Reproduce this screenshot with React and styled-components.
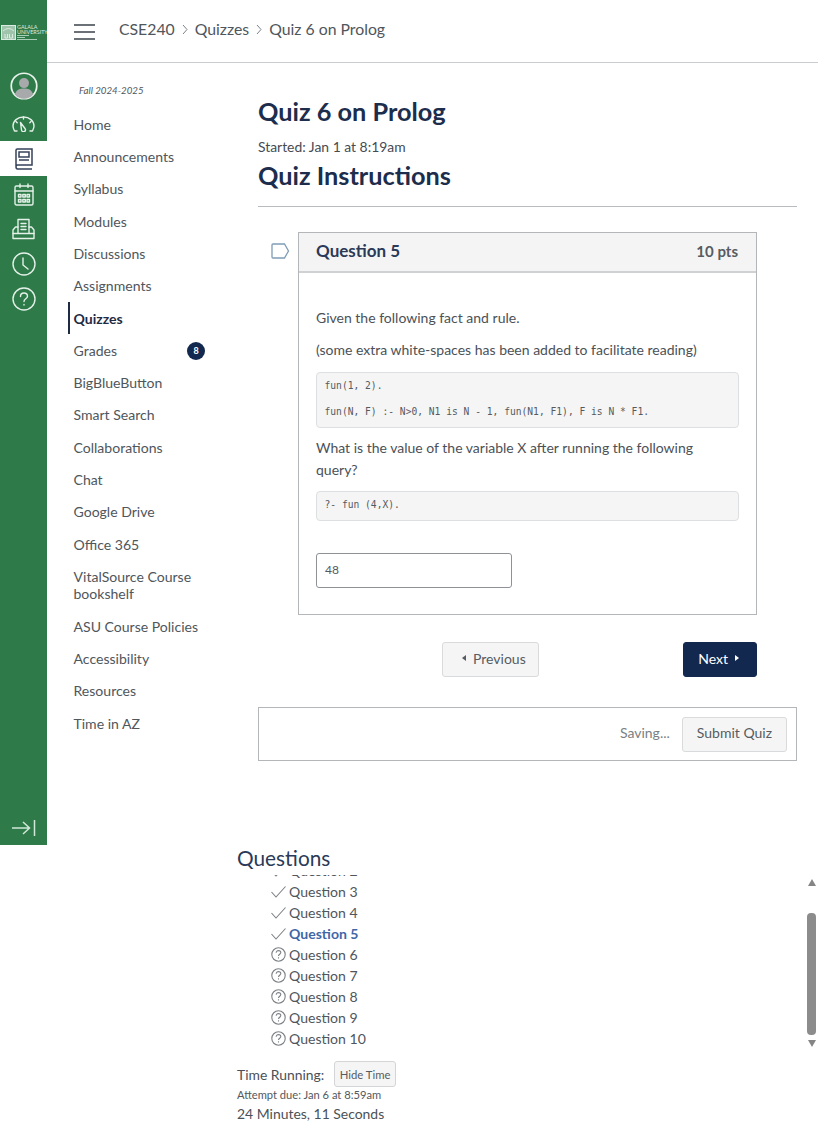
import React from "react";
import styled, { createGlobalStyle } from "styled-components";

const GlobalStyle = createGlobalStyle`
  html, body { margin: 0; padding: 0; background: #fff; }
  body { font-family: Lato, "Open Sans", sans-serif; color: #4b5157; }
  * { box-sizing: border-box; }
`;

const Page = styled.div`
  width: 826px;
  height: 1145px;
  overflow: hidden;
`;

const Top = styled.div`
  display: flex;
  height: 845px;
`;

const Rail = styled.nav`
  width: 47px;
  flex-shrink: 0;
  background: #2f7a49;
  display: flex;
  flex-direction: column;
  align-items: center;
  padding-top: 25px;
`;

const Logo = styled.div`
  width: 47px;
  height: 16px;
  display: flex;
  align-items: flex-start;
  gap: 1px;
  padding-left: 1px;
  color: #dcebe1;
  overflow: hidden;
`;

const LogoText = styled.span`
  display: block;
  font-size: 5.4px;
  line-height: 4.5px;
  white-space: nowrap;
`;

const LogoRule = styled.div`
  width: ${({ $w }) => $w}px;
  height: 1px;
  margin-top: 1px;
  background: #a9cdb6;
`;

const RailItem = styled.div`
  width: 47px;
  height: ${({ $h }) => $h}px;
  margin-top: ${({ $mt }) => $mt || 0}px;
  display: flex;
  align-items: center;
  justify-content: center;
  color: #e3f1e8;
  background: ${({ $active }) => ($active ? "#fff" : "transparent")};
`;

const RailBottom = styled.div`
  margin-top: auto;
  padding-bottom: 8px;
  color: #cfe8d8;
  display: flex;
`;

const Content = styled.div`
  width: 771px;
`;

const Header = styled.header`
  height: 63px;
  border-bottom: 1px solid #c9cdd0;
  padding-left: 27px;
  display: flex;
  align-items: center;
  padding-bottom: 5px;
`;

const Burger = styled.div`
  width: 21px;
  height: 16px;
  margin: 7px 24px 0 0;
  border-top: 2px solid #6b7176;
  border-bottom: 2px solid #6b7176;
  position: relative;
  &::after {
    content: "";
    position: absolute;
    left: 0;
    right: 0;
    top: 5px;
    height: 2px;
    background: #6b7176;
  }
`;

const Crumb = styled.span`
  font-size: 15.8px;
  color: #4f565c;
`;

const CrumbSep = styled.svg`
  width: 8px;
  height: 11px;
  margin: 1px 6px 0 6px;
`;

const Body = styled.div`
  display: flex;
`;

const CourseNav = styled.aside`
  width: 190px;
  margin-left: 21px;
  padding-top: 21px;
  flex-shrink: 0;
`;

const Term = styled.div`
  font-size: 9.7px;
  font-style: italic;
  line-height: 12px;
  margin: 0 0 12.4px 11px;
  color: #50565b;
`;

const NavLink = styled.div`
  width: 137px;
  height: ${({ $tall }) => ($tall ? 49.8 : 32.3)}px;
  display: flex;
  align-items: center;
  justify-content: space-between;
  padding-left: 3.5px;
  font-size: 14.05px;
  line-height: 17.5px;
  color: ${({ $active }) => ($active ? "#1f2b44" : "#4f565c")};
  font-weight: ${({ $active }) => ($active ? 700 : 400)};
  border-left: 2px solid ${({ $active }) => ($active ? "#1f2b44" : "transparent")};
`;

const NavBadge = styled.span`
  width: 18px;
  height: 18px;
  border-radius: 50%;
  background: #12284f;
  color: #fff;
  font-size: 9px;
  font-weight: 700;
  display: flex;
  align-items: center;
  justify-content: center;
`;

const Main = styled.main`
  width: 539px;
  padding-top: 31px;
`;

const Title = styled.h1`
  margin: 0;
  font-size: 25.3px;
  line-height: 34px;
  font-weight: 700;
  color: #1c2d4d;
`;

const Started = styled.div`
  font-size: 13.9px;
  line-height: 18px;
  margin: 10px 0 2px;
  color: #454b52;
`;

const Subtitle = styled.h2`
  margin: 0;
  font-size: 25.3px;
  line-height: 34px;
  font-weight: 700;
  color: #1c2d4d;
  padding-bottom: 14px;
  border-bottom: 1px solid #b8bcc0;
`;

const QuestionRow = styled.div`
  position: relative;
  margin: 25px 40px 0 40px;
`;

const Flag = styled.svg`
  position: absolute;
  left: -27px;
  top: 11px;
  width: 19px;
  height: 16px;
`;

const Card = styled.section`
  border: 1px solid #b4b7ba;
`;

const CardHead = styled.div`
  height: 40px;
  background: #f4f4f4;
  border-bottom: 2px solid #cfd1d3;
  padding: 0 18px 3px 17px;
  display: flex;
  align-items: center;
  justify-content: space-between;
`;

const CardTitle = styled.span`
  font-size: 17px;
  font-weight: 700;
  color: #2a3a58;
`;

const Points = styled.span`
  font-size: 15px;
  font-weight: 700;
  color: #565c62;
`;

const CardBody = styled.div`
  padding: 33px 17px 26px;
`;

const Para = styled.p`
  margin: 0 0 ${({ $mb }) => $mb ?? 14}px;
  font-size: 14px;
  line-height: ${({ $lh }) => $lh || 24}px;
  color: #4b5157;
  width: ${({ $w }) => $w || "auto"};
`;

const Code = styled.div`
  background: #f5f5f5;
  border: 1px solid #dedfe0;
  border-radius: 4px;
  padding: 0 7.5px 2px;
  margin-bottom: 9px;
  font-family: "DejaVu Sans Mono", monospace;
  font-size: 9.65px;
  color: #555a5f;
`;

const CodeLine = styled.div`
  height: 26px;
  line-height: 26px;
`;

const Answer = styled.div`
  width: 196px;
  height: 35px;
  margin-top: 32px;
  border: 1px solid #8e9296;
  border-radius: 3px;
  padding: 0 8px 3px;
  display: flex;
  align-items: center;
  font-size: 12px;
  color: #555a5f;
`;

const Pager = styled.div`
  display: flex;
  justify-content: space-between;
  margin: 27px 40px 0 184px;
`;

const Btn = styled.div`
  height: 35px;
  padding: ${({ $pad }) => $pad || "0 14px 3px"};
  border-radius: 3px;
  display: flex;
  align-items: center;
  gap: 7px;
  font-size: 14px;
  background: ${({ $primary }) => ($primary ? "#12284f" : "#f5f5f5")};
  color: ${({ $primary }) => ($primary ? "#fff" : "#565c62")};
  border: 1px solid ${({ $primary }) => ($primary ? "#12284f" : "#d9dadb")};
`;

const Tri = styled.span`
  width: 0;
  height: 0;
  border-top: 3px solid transparent;
  border-bottom: 3px solid transparent;
  ${({ $left }) => ($left ? "border-right: 4px solid currentColor;" : "border-left: 4px solid currentColor;")}
`;

const SubmitBar = styled.div`
  height: 54px;
  margin-top: 30px;
  border: 1px solid #b4b7ba;
  display: flex;
  align-items: center;
  justify-content: flex-end;
  padding-right: 9px;
  gap: 12px;
`;

const Saving = styled.span`
  font-size: 14px;
  margin-bottom: 3px;
  color: #7a7f84;
`;

const Bottom = styled.div`
  padding-left: 237px;
  position: relative;
`;

const QuestionsTitle = styled.h3`
  margin: 0;
  padding-bottom: 4px;
  font-size: 20.8px;
  line-height: 26px;
  font-weight: 400;
  color: #2a3a58;
`;

const ListWindow = styled.div`
  height: 175px;
  overflow: hidden;
`;

const List = styled.ul`
  list-style: none;
  margin: -15px 0 0 34px;
  padding: 0;
`;

const ListItem = styled.li`
  height: 21px;
  display: flex;
  align-items: center;
  gap: 3px;
  font-size: 14.05px;
  color: ${({ $current }) => ($current ? "#3f67a8" : "#4f565c")};
  font-weight: ${({ $current }) => ($current ? 700 : 400)};
`;

const StatusIcon = styled.svg`
  width: 15px;
  height: 15px;
  color: #7c8085;
  flex-shrink: 0;
`;

const Scrollbar = styled.div`
  position: absolute;
  left: 807px;
  top: 34px;
  width: 9px;
  display: flex;
  flex-direction: column;
  align-items: center;
`;

const ScrollArrow = styled.span`
  width: 0;
  height: 0;
  border-left: 4.5px solid transparent;
  border-right: 4.5px solid transparent;
  ${({ $down }) => ($down ? "border-top: 7px solid #858585;" : "border-bottom: 7px solid #858585;")}
`;

const ScrollThumb = styled.div`
  width: 9px;
  height: 122px;
  margin: 27px 0 5px;
  border-radius: 4px;
  background: #8c8c8c;
`;

const TimerRow = styled.div`
  display: flex;
  align-items: center;
  gap: 9.500px;
  margin-top: 11px;
  font-size: 13.9px;
  color: #4b5157;
`;

const SmallBtn = styled.div`
  height: 26px;
  padding: 0 5px;
  border: 1px solid #d4d5d6;
  border-radius: 3px;
  background: #f5f5f5;
  display: flex;
  align-items: center;
  font-size: 11.3px;
  color: #565c62;
`;

const Due = styled.div`
  font-size: 11.15px;
  line-height: 14px;
  margin-top: 1px;
  color: #53585d;
`;

const Remaining = styled.div`
  font-size: 13.95px;
  line-height: 20px;
  margin-top: 2px;
  color: #4b5157;
`;

const navItems = [
  "Home", "Announcements", "Syllabus", "Modules", "Discussions", "Assignments",
  "Quizzes", "Grades", "BigBlueButton", "Smart Search", "Collaborations", "Chat",
  "Google Drive", "Office 365", "VitalSource Course bookshelf", "ASU Course Policies",
  "Accessibility", "Resources", "Time in AZ",
];

const Svg = ({ w = 26, h = 26, children }) => (
  <svg width={w} height={h} viewBox={`0 0 ${w} ${h}`} fill="none" stroke="currentColor" strokeWidth="1.4" strokeLinecap="round" strokeLinejoin="round">
    {children}
  </svg>
);

const Sep = () => (
  <CrumbSep viewBox="0 0 8 11" fill="none" stroke="#7b8186" strokeWidth="1">
    <path d="M2 1l4 4.5L2 10" />
  </CrumbSep>
);

const QuestionStatus = ({ done }) => (
  <StatusIcon viewBox="0 0 15 15" fill="none" stroke="currentColor" strokeWidth="1.1">
    {done ? (
      <path d="M0.500 8l4.500 5L14.500 2.500" />
    ) : (
      <>
        <circle cx="7.5" cy="7.5" r="6.7" />
        <path d="M5.200 5.800c0-1.400 1.100-2.200 2.300-2.200s2.300.8 2.300 2c0 1.700-2.300 1.700-2.300 3.500" />
        <path d="M7.500 10.300v1.200" />
      </>
    )}
  </StatusIcon>
);

const questions = [2, 3, 4, 5, 6, 7, 8, 9, 10];

export default function App() {
  return (
    <Page>
      <GlobalStyle />
      <Top>
        <Rail>
          <Logo>
            <svg width="15" height="15" viewBox="0 0 15 15" fill="none" stroke="#dcebe1" strokeWidth="1" style={{ flexShrink: 0 }}>
              <rect x="0.5" y="0.5" width="14" height="14" fill="#9fc4ab" />
              <path d="M2 6q5.500-5 11 0M4 9v4h2.500V9M8.500 9v4h3V9" />
            </svg>
            <div>
              <LogoText>GALALA<br />UNIVERSITY</LogoText>
              <LogoRule $w={12} />
              <LogoRule $w={8} />
              <LogoRule $w={20} />
            </div>
          </Logo>
          <RailItem $h={28} $mt={31}>
            <svg width="28" height="28" viewBox="0 0 29 29">
              <circle cx="14.5" cy="14.5" r="13.2" fill="#2f7a49" stroke="#e8f3ec" strokeWidth="1.8" />
              <circle cx="14.5" cy="11.5" r="5.2" fill="#a7a9ab" />
              <path d="M5 23c2-5 5-6 9.500-6s7.500 1 9.500 6a12 12 0 0 1-19 0z" fill="#a7a9ab" />
            </svg>
          </RailItem>
          <RailItem $h={35} $mt={6}>
            <Svg w={23} h={16}>
              <path d="M5 15H2.500C1.500 13 1 11.500 1 10 1 5 5.500 1 11.500 1S22 5 22 10c0 1.500-.5 3-1.500 5H18" />
              <path d="M8.500 6.500l4.500 6a2 2 0 1 1-3.500 1.500z" />
              <path d="M4 5.500l1.200 1.200M19 5.500l-1.200 1.200M11.500 1v2" />
            </Svg>
          </RailItem>
          <RailItem $h={35} $active>
            <svg width="18" height="22" viewBox="0 0 18 22" fill="none" stroke="#34415a" strokeWidth="1.5">
              <path d="M1 18V2.300C1 1.500 1.500 1 2.300 1H17v16H2.500C1.600 17 1 17.700 1 18.800S1.600 21 2.500 21H17" />
              <rect x="4" y="4" width="10" height="5" />
              <path d="M4 12h10" />
            </svg>
          </RailItem>
          <RailItem $h={36}>
            <Svg w={20} h={23}>
              <rect x="1" y="3" width="18" height="19" rx="1.500" />
              <path d="M1 8h18M6 1v3.500M14 1v3.500" />
              <path d="M4.500 11.500h2.500V14H4.500zM8.800 11.500h2.500V14H8.800zM13 11.500h2.500V14H13zM4.500 16.500h2.500V19H4.500zM8.800 16.500h2.500V19H8.800zM13 16.500h2.500V19H13z" />
            </Svg>
          </RailItem>
          <RailItem $h={33}>
            <Svg w={23} h={22}>
              <path d="M6 15V1.500h11V15" />
              <path d="M9 5.500h5M9 8.500h5M9 11.500h5" />
              <path d="M6 9H3.500L1 12v8.500h21V12l-2.500-3H17" />
              <path d="M1 15.500h21" />
            </Svg>
          </RailItem>
          <RailItem $h={38}>
            <Svg w={24} h={24}>
              <circle cx="12" cy="12" r="11" />
              <path d="M11 6v7l5 4" />
            </Svg>
          </RailItem>
          <RailItem $h={32}>
            <Svg w={24} h={24}>
              <circle cx="12" cy="12" r="11" />
              <path d="M8.500 9.500c0-2.200 1.600-3.500 3.500-3.500s3.500 1.300 3.500 3.200c0 2.600-3.500 2.600-3.500 5.300" />
              <path d="M12 17.500v.5" />
            </Svg>
          </RailItem>
          <RailBottom>
            <svg width="24" height="18" viewBox="0 0 24 18" fill="none" stroke="currentColor" strokeWidth="1.500">
              <path d="M0 9h17M11 3l6.500 6-6.500 6M22.500 1v16" />
            </svg>
          </RailBottom>
        </Rail>
        <Content>
          <Header>
            <Burger />
            <Crumb>CSE240</Crumb>
            <Sep />
            <Crumb>Quizzes</Crumb>
            <Sep />
            <Crumb>Quiz 6 on Prolog</Crumb>
          </Header>
          <Body>
            <CourseNav>
              <Term>Fall 2024-2025</Term>
              {navItems.map((item) => (
                <NavLink key={item} $active={item === "Quizzes"} $tall={item.startsWith("VitalSource")}>
                  {item}
                  {item === "Grades" && <NavBadge>8</NavBadge>}
                </NavLink>
              ))}
            </CourseNav>
            <Main>
              <Title>Quiz 6 on Prolog</Title>
              <Started>Started: Jan 1 at 8:19am</Started>
              <Subtitle>Quiz Instructions</Subtitle>
              <QuestionRow>
                <Flag viewBox="0 0 19 16" fill="none" stroke="#7f9cb8" strokeWidth="1.300">
                  <path d="M2 1h11.500l4 7-4 7H2a1 1 0 0 1-1-1V2a1 1 0 0 1 1-1z" />
                </Flag>
                <Card>
                  <CardHead>
                    <CardTitle>Question 5</CardTitle>
                    <Points>10 pts</Points>
                  </CardHead>
                  <CardBody>
                    <Para $mb={8}>Given the following fact and rule.</Para>
                    <Para $mb={10}>(some extra white-spaces has been added to facilitate reading)</Para>
                    <Code>
                      <CodeLine>fun(1, 2).</CodeLine>
                      <CodeLine>fun(N, F) :- N&gt;0, N1 is N - 1, fun(N1, F1), F is N * F1.</CodeLine>
                    </Code>
                    <Para $mb={10} $lh={22} $w="400px">What is the value of the variable X after running the following query?</Para>
                    <Code>
                      <CodeLine>?- fun (4,X).</CodeLine>
                    </Code>
                    <Answer>48</Answer>
                  </CardBody>
                </Card>
              </QuestionRow>
              <Pager>
                <Btn $pad="0 12px 3px 19px">
                  <Tri $left />
                  Previous
                </Btn>
                <Btn $primary $pad="0 17px 3px 14px">
                  Next
                  <Tri />
                </Btn>
              </Pager>
              <SubmitBar>
                <Saving>Saving...</Saving>
                <Btn>Submit Quiz</Btn>
              </SubmitBar>
            </Main>
          </Body>
        </Content>
      </Top>
      <Bottom>
        <QuestionsTitle>Questions</QuestionsTitle>
        <ListWindow>
          <List>
            {questions.map((n) => (
              <ListItem key={n} $current={n === 5}>
                <QuestionStatus done={n <= 5} />
                Question {n}
              </ListItem>
            ))}
          </List>
        </ListWindow>
        <Scrollbar>
          <ScrollArrow />
          <ScrollThumb />
          <ScrollArrow $down />
        </Scrollbar>
        <TimerRow>
          Time Running:
          <SmallBtn>Hide Time</SmallBtn>
        </TimerRow>
        <Due>Attempt due: Jan 6 at 8:59am</Due>
        <Remaining>24 Minutes, 11 Seconds</Remaining>
      </Bottom>
    </Page>
  );
}
